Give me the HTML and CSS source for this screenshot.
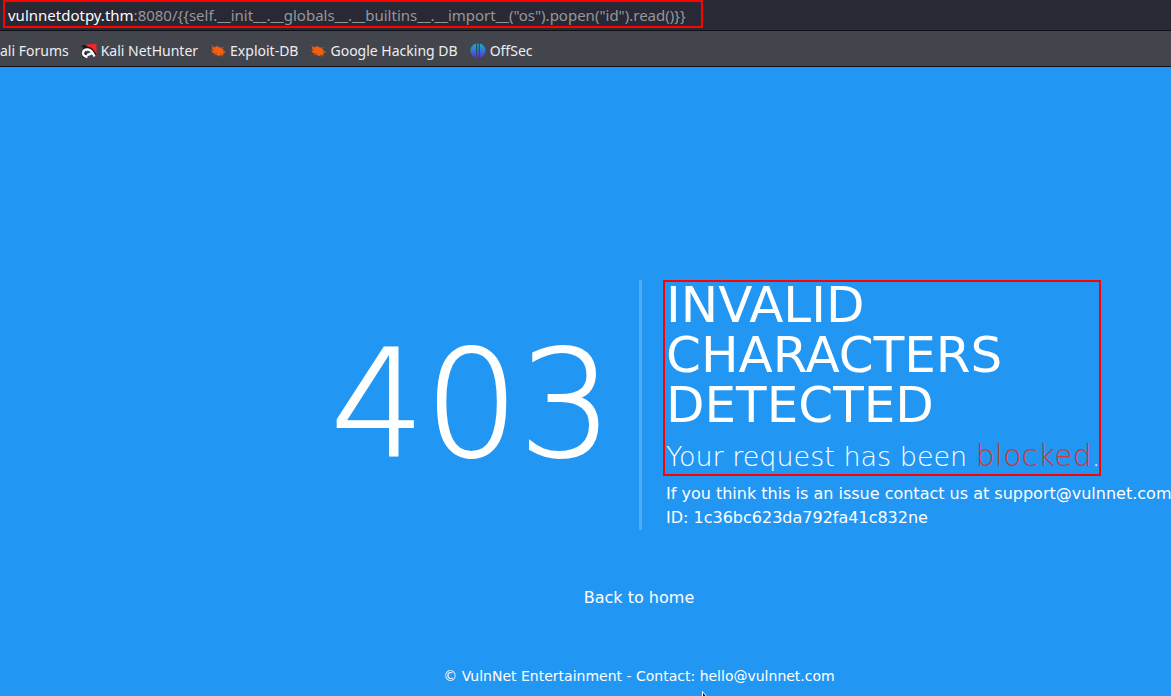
FILE: index.html
```html
<!DOCTYPE html>
<html lang="en">
<head>
<meta charset="utf-8">
<title>403</title>
<link rel="stylesheet" href="styles.css">
</head>
<body>
<header class="browser">
  <div class="address"><span class="url"><b class="host">vulnnetdotpy.thm</b>:8080/{{self.__init__.__globals__.__builtins__.__import__("os").popen("id").read()}}</span></div>
  <nav class="bookmarks">
    <a class="bookmark" href="#">ali Forums</a>
    <a class="bookmark" href="#"><svg class="icon" viewBox="0 0 16 16"><path d="M3.500 1.500 15.500 1v13z" fill="#f0282d"/><path d="M0 3 4 1.500 7 4 4 6zM1 13l3-1 1 2.500H2z" fill="#17191c"/><path d="M4.500 12.500C0 10 3.500 4.500 8 6c3 1 4.500 4 6 7" fill="none" stroke="#17191c" stroke-width="4"/><path d="M6.500 14C-.5 12.500 1.500 6 7 6.500c3 .5 5 3.500 6.500 7M6 11.500c2 1 3-1.500 5-1" fill="none" stroke="#fff" stroke-width="2.400"/></svg>Kali NetHunter</a>
    <a class="bookmark" href="#"><svg class="icon" viewBox="0 0 16 16"><path d="M2 4h3l2-1 3 1.500 2.500 1L14 8l1 2-2 .5.500 2-2.500-.5-2 1-2.500-1-2-1.500L2 9.500l.5-2z" fill="#ef5f12"/><path d="m1 2 4 3M1 8l3-1m7-2 3-.5M4 12l3-1.500m4 1 1 2.500m1-5.500h3" stroke="#b04a20"/></svg>Exploit-DB</a>
    <a class="bookmark" href="#"><svg class="icon" viewBox="0 0 16 16"><path d="M2 4h3l2-1 3 1.500 2.500 1L14 8l1 2-2 .5.500 2-2.500-.5-2 1-2.500-1-2-1.500L2 9.500l.5-2z" fill="#ef5f12"/><path d="m1 2 4 3M1 8l3-1m7-2 3-.5M4 12l3-1.500m4 1 1 2.500m1-5.500h3" stroke="#b04a20"/></svg>Google Hacking DB</a>
    <a class="bookmark" href="#"><svg class="icon" viewBox="0 0 16 16"><defs><linearGradient id="os" x2="0" y2="16" gradientUnits="userSpaceOnUse"><stop stop-color="#10b5c9"/><stop offset=".5" stop-color="#3473d4"/><stop offset="1" stop-color="#6c1fd8"/></linearGradient></defs><path d="M6 .8v13.700C2.500 13.500.5 11 .5 7.500S3 1.500 6 .8zM7.300.5h1.500v15H7.300zM10 .8c3 .7 5.500 3.200 5.500 6.700s-2 6-5.500 7z" fill="url(#os)"/></svg>OffSec</a>
  </nav>
</header>
<main class="page">
  <section class="error">
    <div class="code">403</div>
    <div class="details">
      <div class="notice">
        <h1 class="title">INVALID CHARACTERS DETECTED</h1>
        <p class="lead">Your request has been <em class="blocked">blocked</em>.</p>
      </div>
      <p class="contact">If you think this is an issue contact us at support@vulnnet.com<br>ID: 1c36bc623da792fa41c832ne</p>
    </div>
  </section>
  <a class="home" href="#">Back to home</a>
  <footer class="footer">© VulnNet Entertainment - Contact: hello@vulnnet.com</footer>
  <svg class="cursor" viewBox="0 0 8 12"><path d="M.5.5v11L3 9h4.500z" fill="#111" stroke="#fff"/></svg>
</main>
</body>
</html>
```
FILE: styles.css
```css
* { box-sizing: border-box; }
body {
  margin: 0;
  min-height: 100vh;
  display: flex;
  flex-direction: column;
  overflow: hidden;
  background: #2296f3;
  color: #fff;
  font-family: "DejaVu Sans", sans-serif;
}
h1, p { margin: 0; font-weight: 400; }
a { color: inherit; text-decoration: none; }
.browser {
  font: 14px/20px "Noto Sans", sans-serif;
  white-space: nowrap;
}
.address {
  height: 31px;
  padding-left: 3px;
  background: #282935;
  border-bottom: 1px solid #0f1014;
}
.url {
  display: inline-block;
  height: 28px;
  padding: 3px 15px 0 3px;
  border: 2px solid #f00;
  color: #96979b;
  font-size: 15px;
}
.host { color: #fbfbfe; font-weight: 400; }
.bookmarks {
  display: flex;
  align-items: center;
  gap: 12px;
  height: 36px;
  padding-top: 4px;
  background: #43454d;
  border-bottom: 1px solid #0f1014;
  color: #ededf0;
}
.bookmark { display: flex; align-items: center; gap: 4px; }
.icon { width: 16px; height: 16px; }
.page {
  position: relative;
  flex: 1;
  display: flex;
  flex-direction: column;
  padding: 213px 0 9px 107px;
}
.error {
  display: grid;
  grid-template-columns: 1fr 1fr;
}
.code {
  align-self: center;
  justify-self: end;
  padding-right: 26px;
  font-size: 148px;
  font-weight: 200;
  line-height: 1;
  -webkit-text-stroke: 2px #fff;
}
.details {
  min-width: 0;
  padding-left: 24px;
  border-left: 3px solid #4eabf5;
}
.notice { position: relative; width: 432px; }
.notice::after {
  content: "";
  position: absolute;
  inset: 0 -3px 6px;
  border: 2px solid #f00;
}
.title { width: 400px; font-size: 50px; line-height: 50px; }
.lead {
  height: 52px;
  font-size: 27px;
  font-weight: 200;
  line-height: 52px;
  white-space: nowrap;
}
.blocked { color: #cc3a33; font-size: 30px; font-style: normal; }
.contact { font-size: 16px; line-height: 24px; white-space: nowrap; }
.home { align-self: center; margin-top: 56px; font-size: 16px; line-height: 24px; }
.footer { margin-top: auto; text-align: center; font-size: 14px; line-height: 22px; }
.cursor { position: absolute; left: 702px; bottom: -7px; width: 8px; height: 12px; }
```
